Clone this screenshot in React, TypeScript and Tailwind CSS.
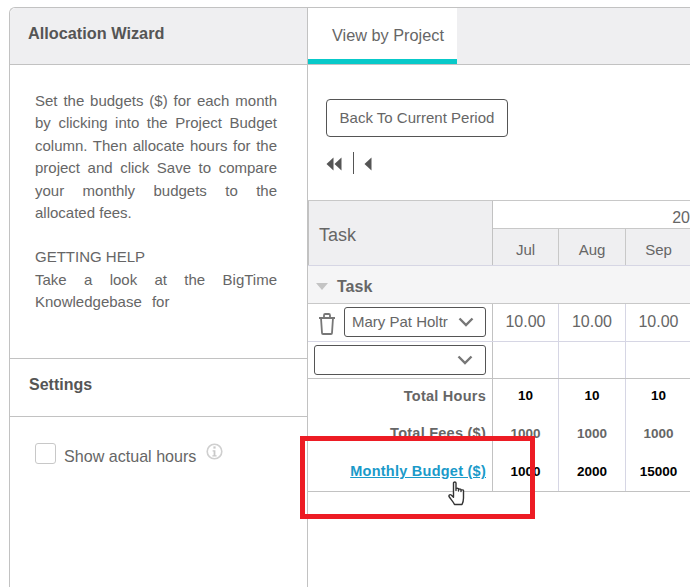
import React from "react";

const Tri = ({ className = "" }: { className?: string }) => (
  <svg width="8" height="14" viewBox="0 0 8 14" className={className}>
    <path d="M7.5 0.5V13.5L0.5 7Z" fill="#555" />
  </svg>
);

const Chevron = () => (
  <svg width="16" height="10" viewBox="0 0 16 10" className="shrink-0">
    <path d="M1.5 1.5L8 8L14.5 1.5" fill="none" stroke="#777" strokeWidth="2.4" />
  </svg>
);

const Cell = ({ w, children, className = "" }: { w: string; children?: React.ReactNode; className?: string }) => (
  <div className={`${w} shrink-0 flex items-center justify-center border-r border-[#d6d6e4] ${className}`}>{children}</div>
);

const Cols = ({ vals, className = "" }: { vals: string[]; className?: string }) => (
  <>
    <Cell w="w-[66px]" className={className}>{vals[0]}</Cell>
    <Cell w="w-[67px]" className={className}>{vals[1]}</Cell>
    <Cell w="w-[66px]" className={className}>{vals[2]}</Cell>
  </>
);

const Line = ({ children }: { children: React.ReactNode }) => (
  <p className="whitespace-nowrap text-justify [text-align-last:justify]">{children}</p>
);

export default function App() {
  return (
    <div className="relative h-[587px] w-[690px] overflow-hidden bg-white pl-[9px] pt-[7px] font-['Liberation_Sans',Arial,sans-serif] text-[#555]">
      <div className="flex h-full w-[700px] rounded-tl-[6px] border-l border-t border-[#c2c2c2]">
        {/* Sidebar */}
        <aside className="flex w-[298px] shrink-0 flex-col border-r border-[#c2c2c2]">
          <div className="flex h-[57px] shrink-0 items-center rounded-tl-[6px] border-b border-[#c2c2c2] bg-[#efeff1] pb-[5px] pl-[18px] text-[16.3px] font-bold">
            Allocation Wizard
          </div>
          <div className="h-[293px] w-[267px] shrink-0 pl-[25px] pt-[25px] text-[15px] leading-[22.4px] text-[#666]">
            <Line>Set the budgets ($) for each month</Line>
            <Line>by clicking into the Project Budget</Line>
            <Line>column. Then allocate hours for the</Line>
            <Line>project and click Save to compare</Line>
            <Line>your monthly budgets to the</Line>
            <p>allocated fees.</p>
            <p className="mt-[22px]">GETTING HELP</p>
            <Line>Take a look at the BigTime</Line>
            <p className="[word-spacing:6px]">Knowledgebase for</p>
          </div>
          <div className="flex h-[59px] shrink-0 items-center border-y border-[#c2c2c2] pb-[5px] pl-[19px] text-[16px] font-bold">
            Settings
          </div>
          <div className="flex items-start pl-[25px] pt-[26px] text-[16.1px] text-[#666]">
            <div className="h-[21px] w-[21px] shrink-0 rounded-[3px] border border-[#c8c8c8]" />
            <span className="ml-[8px] mt-[3px] leading-[20px]">Show actual hours</span>
            <svg width="17" height="17" viewBox="0 0 17 17" className="ml-[10px]">
              <circle cx="8.5" cy="8.5" r="7.3" fill="none" stroke="#cfcfcf" strokeWidth="1.6" />
              <rect x="7.4" y="3.4" width="2.2" height="2.2" fill="#c8c8c8" />
              <path d="M6.6 7.2H9.4V12.2H10.6V13.4H6.4V12.2H7.6V8.4H6.6Z" fill="#c8c8c8" />
            </svg>
          </div>
        </aside>

        {/* Main */}
        <main className="flex w-[393px] shrink-0 flex-col">
          <div className="flex h-[57px] shrink-0 border-b border-[#c2c2c2] bg-[#efeff1]">
            <div className="h-[56px] w-[149px] border-b-[5px] border-[#08c9c9] bg-white pl-[24px] pt-[15px] text-[16.3px] leading-[24px] text-[#666]">
              View by Project
            </div>
          </div>

          <button className="ml-[18px] mt-[34px] h-[38px] w-[182px] shrink-0 rounded-[4px] border border-[#555] pt-px text-[15px] text-[#666]">
            Back To Current Period
          </button>

          <div className="ml-[18px] mt-[15px] flex h-[22px] shrink-0 items-center">
            <Tri className="mt-[2px]" />
            <Tri className="mt-[2px] -ml-[0.5px]" />
            <div className="ml-[11px] h-[22px] w-px bg-[#555]" />
            <Tri className="ml-[10px] mt-[2px]" />
          </div>

          {/* Table */}
          <div className="mt-[26px] w-[383px] border-t border-[#c8c8c8] text-[#666]">
            <div className="flex h-[65px] border-b border-[#d6d6e4]">
              <div className="flex w-[185px] shrink-0 items-center border-x border-[#c2c2c2] bg-[#efeff1] pl-[10px] pt-[4px] text-[18px]">Task</div>
              <div className="flex w-[199px] shrink-0 flex-col">
                <div className="flex h-[28px] shrink-0 items-center justify-end border-b border-[#c8c8c8] pr-[2px] pt-[6px] text-[16px]">20</div>
                <div className="flex flex-1 bg-[#efeff1] text-[15px]">
                  <Cols vals={["Jul", "Aug", "Sep"]} className="!border-[#c8c8c8] pt-[6px]" />
                </div>
              </div>
            </div>

            <div className="flex h-[38px] items-center border-b border-[#c8c8c8] bg-[#f5f5f6] pl-[8px] pt-[4px] text-[16px] font-bold">
              <svg width="12" height="7" viewBox="0 0 12 7"><path d="M0 0H12L6 7Z" fill="#c4c4c4" /></svg>
              <span className="ml-[9px]">Task</span>
            </div>

            <div className="flex h-[38px] border-b border-[#d6d6e4]">
              <div className="flex w-[185px] shrink-0 items-start border-r border-[#c2c2c2] pl-[10px] pt-[3px]">
                <svg width="18" height="22" viewBox="0 0 18 22" fill="none" stroke="#777" strokeWidth="1.8" className="mt-[6px]">
                  <path d="M1 5H17M6 5V2.2C6 1.5 6.5 1 7.2 1H10.8C11.5 1 12 1.5 12 2.2V5M3 5L4 20C4 20.6 4.4 21 5 21H13C13.6 21 14 20.6 14 20L15 5" />
                </svg>
                <div className="ml-[8px] flex h-[30px] w-[142px] items-center rounded-[3px] border border-[#555] pl-[7px] pr-[11px] text-[15px]">
                  <span className="whitespace-nowrap">Mary Pat Holtr</span>
                  <span className="ml-auto"><Chevron /></span>
                </div>
              </div>
              <Cols vals={["10.00", "10.00", "10.00"]} className="pb-[2px] text-[16px]" />
            </div>

            <div className="flex h-[37px] border-b border-[#c2c2c2]">
              <div className="flex w-[185px] shrink-0 items-center border-r border-[#c2c2c2] pl-[6px]">
                <div className="flex h-[30px] w-[172px] items-center justify-end rounded-[3px] border border-[#555] pr-[12px]">
                  <Chevron />
                </div>
              </div>
              <Cols vals={["", "", ""]} />
            </div>

            <div className="flex h-[35px] text-[14.5px] font-bold">
              <div className="flex w-[185px] shrink-0 items-center justify-end border-r border-[#c2c2c2] pr-[6px] tracking-[0.25px]">Total Hours</div>
              <Cols vals={["10", "10", "10"]} className="text-[13.5px] text-black" />
            </div>
            <div className="flex h-[38px] text-[14.5px] font-bold">
              <div className="flex w-[185px] shrink-0 items-center justify-end border-r border-[#c2c2c2] pr-[6px] pt-[2px] tracking-[0.25px]">Total Fees ($)</div>
              <Cols vals={["1000", "1000", "1000"]} className="pt-[2px] text-[13.5px] text-[#666]" />
            </div>
            <div className="flex h-[40px] border-b border-[#c2c2c2] text-[14.5px] font-bold">
              <div className="flex w-[185px] shrink-0 items-center justify-end border-r border-[#c2c2c2] pr-[6px] pt-px tracking-[0.25px]">
                <a className="text-[#1a9ac9] underline">Monthly Budget ($)</a>
              </div>
              <Cols vals={["1000", "2000", "15000"]} className="pt-px text-[13.5px] text-black" />
            </div>
          </div>
        </main>
      </div>

      {/* Annotation over the page */}
      <div className="pointer-events-none absolute left-[300px] top-[436px] h-[83px] w-[235px] border-[5px] border-[#ed1c24]" />
      <svg width="20" height="26" viewBox="0 0 20 26" className="pointer-events-none absolute left-[448px] top-[480px]">
        <path
          d="M5.5 15V3C5.5 1.6 8 1.6 8 3V10.5V9C8 7.8 10.5 7.8 10.5 9V11V9.8C10.5 8.6 13 8.6 13 9.8V11.5V10.6C13 9.6 15.5 9.6 15.5 10.6V18C15.5 21 15 22.5 14 24.5H6.5C5.5 22 3 19.5 1.3 17C0.3 15.4 1.8 14 3.2 15L5.5 17.2Z"
          fill="#fff"
          stroke="#333"
          strokeWidth="1.4"
          strokeLinejoin="round"
        />
      </svg>
    </div>
  );
}
